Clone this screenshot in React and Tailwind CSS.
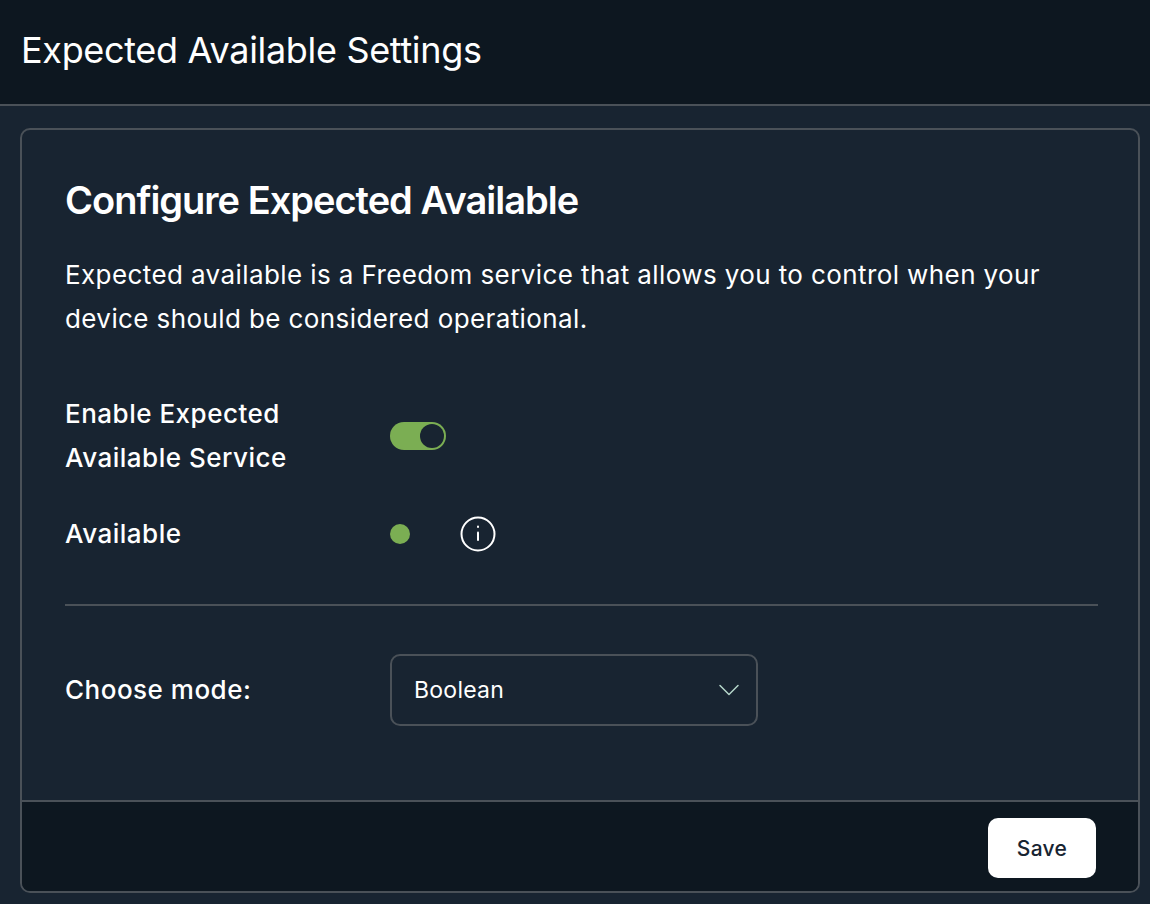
import { ChevronDown } from "lucide-react";

function SettingRow({ label, className = "", children }) {
  return (
    <div className={`flex items-center ${className}`}>
      <div className="w-[325px] shrink-0 text-[26px] leading-[44px] font-medium tracking-[0.5px] text-white">{label}</div>
      {children}
    </div>
  );
}

function InfoIcon() {
  return (
    <svg viewBox="0 0 36 36" fill="none" stroke="currentColor" className="h-9 w-9 text-white" aria-hidden>
      <circle cx="18" cy="18" r="16.5" strokeWidth="2" />
      <path d="M18 16.5v7.5" strokeWidth="2" strokeLinecap="round" />
      <path d="M18 10.5v0.5" strokeWidth="2" strokeLinecap="round" />
    </svg>
  );
}

export default function App() {
  return (
    <div className="flex min-h-[904px] flex-col bg-[#182431] font-['Inter',sans-serif] text-white">
      <header className="flex h-[106px] items-center border-b-2 border-[#4a5158] bg-[#0d1720] pb-[4px] pl-[21px]">
        <h1 className="text-[36px] font-normal tracking-[-0.33px]">Expected Available Settings</h1>
      </header>

      <main className="pt-[22px] pr-[10px] pl-5">
        <section className="flex h-[765px] flex-col overflow-hidden rounded-[10px] border-2 border-[#4a5158]">
          <div className="flex-1 pt-[45px] pr-[40px] pl-[43px]">
            <h2 className="text-[38px] leading-[50px] font-semibold tracking-[-1px]">Configure Expected Available</h2>
            <p className="mt-[28px] text-[26px] leading-[44px] font-normal tracking-[0.4px]">
              Expected available is a Freedom service that allows you to control when your device should be considered operational.
            </p>

            <SettingRow label={<>Enable Expected<br />Available Service</>} className="mt-[51px]">
              <div className="flex h-7 w-14 items-center justify-end rounded-full bg-[#7bae53] pr-[2px]">
                <div className="h-6 w-6 rounded-full bg-[#182431]" />
              </div>
            </SettingRow>

            <SettingRow label="Available" className="mt-[32px] h-11">
              <div className="h-5 w-5 rounded-full bg-[#7bae53]" />
              <div className="ml-[50px]">
                <InfoIcon />
              </div>
            </SettingRow>

            <div className="mt-[48px] h-[2px] bg-[#4a5158]" />

            <SettingRow label="Choose mode:" className="mt-[48px]">
              <div className="flex h-[72px] w-[368px] items-center justify-between rounded-[10px] border-2 border-[#4a5158] pr-[9px] pl-[22px] text-[23px] tracking-[0.25px]">
                <span>Boolean</span>
                <ChevronDown className="h-9 w-9 text-[#b5d6c9]" strokeWidth={1} />
              </div>
            </SettingRow>
          </div>

          <footer className="flex h-[91px] items-center justify-end border-t-2 border-[#4a5158] bg-[#0d1720] pt-[2px] pr-[42px]">
            <button type="button" className="h-[60px] w-[108px] rounded-[10px] bg-white pt-[2px] text-[21px] font-medium tracking-[0.3px] text-[#182431]">
              Save
            </button>
          </footer>
        </section>
      </main>
    </div>
  );
}
